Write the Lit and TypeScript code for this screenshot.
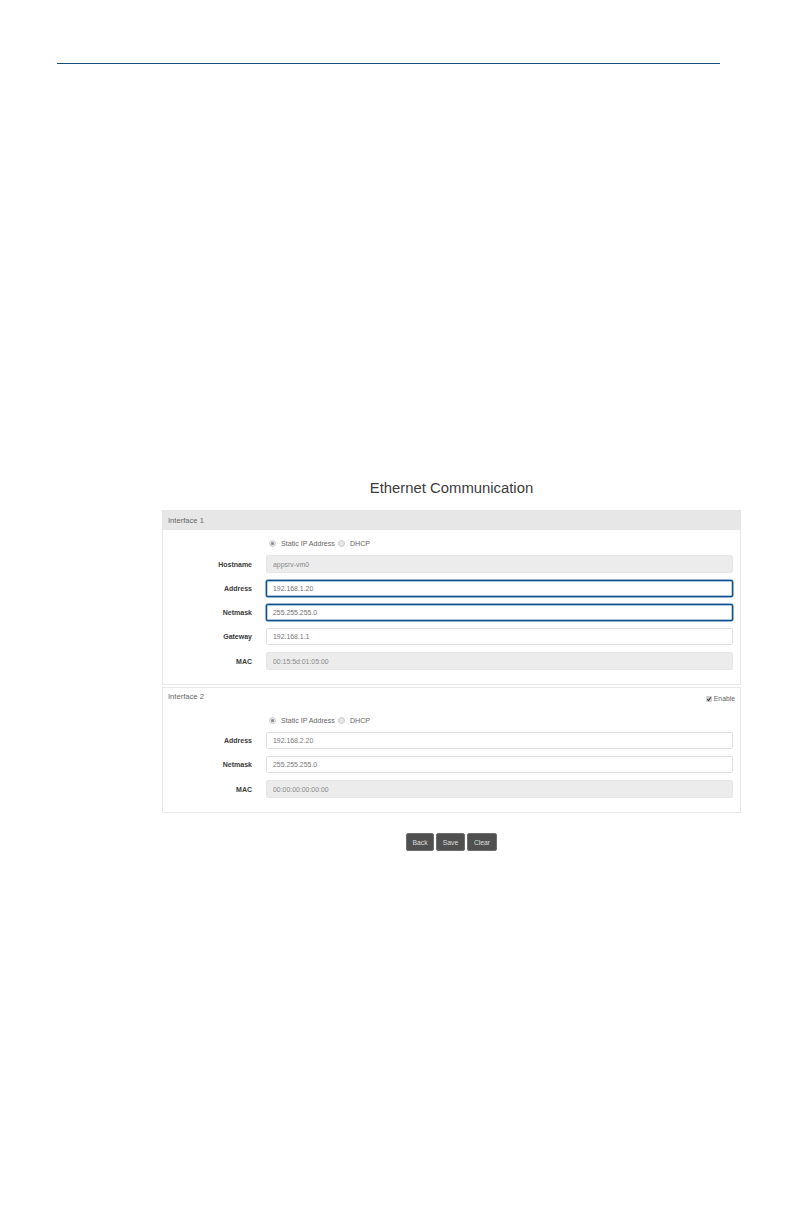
import { LitElement, html, css } from "lit";
import { customElement } from "lit/decorators.js";

type Field = { label: string; value: string; kind?: "off" | "focus" };

const if1: Field[] = [
  { label: "Hostname", value: "appsrv-vm0", kind: "off" },
  { label: "Address", value: "192.168.1.20", kind: "focus" },
  { label: "Netmask", value: "255.255.255.0", kind: "focus" },
  { label: "Gateway", value: "192.168.1.1" },
  { label: "MAC", value: "00:15:5d:01:05:00", kind: "off" },
];
const if2: Field[] = [
  { label: "Address", value: "192.168.2.20" },
  { label: "Netmask", value: "255.255.255.0" },
  { label: "MAC", value: "00:00:00:00:00:00", kind: "off" },
];

@customElement("app-root")
export class AppRoot extends LitElement {
  static styles = css`
    :host {
      display: block;
      width: 793px;
      height: 1225px;
      background: #fff;
      font-family: "Liberation Sans", Arial, sans-serif;
      color: #333;
      overflow: hidden;
    }
    .page { padding-top: 63px; }
    .rule { height: 1px; margin: 0 73px 0 57px; background: #1a4c80; }
    .title {
      margin: 415px 0 0 162px;
      width: 579px;
      height: 18px;
      line-height: 18px;
      text-align: center;
      font-size: 14.85px;
      font-weight: 400;
      color: #3c3c3c;
    }
    .panels { margin: 13px 52px 0 162px; display: flex; flex-direction: column; gap: 2px; }
    .panel { border: 1px solid #e8e8e8; box-sizing: border-box; }
    .p1 { height: 175px; }
    .p2 { height: 126px; }
    .head {
      background: #e7e7e7;
      height: 19px;
      margin: -1px -1px 0;
      padding: 1px 6px 0;
      display: flex;
      align-items: center;
      font-size: 7.6px;
      color: #666;
    }
    .head2 {
      height: 21px;
      padding: 0 5px;
      display: flex;
      justify-content: space-between;
      font-size: 7.6px;
      color: #666;
      line-height: 18px;
    }
    .enable { display: flex; align-items: center; gap: 2px; font-size: 6.8px; color: #666; height: 21px; }
    .check {
      width: 6px;
      height: 6px;
      border-radius: 1px;
      background: #cfcfcf;
      display: block;
    }
    .radios {
      display: flex;
      align-items: center;
      height: 10px;
      margin: 8px 0 7px 106px;
      font-size: 7.1px;
      color: #666;
    }
    .p2 .radios { margin-top: 6px; margin-bottom: 7px; }
    .dot {
      width: 5px;
      height: 5px;
      border-radius: 50%;
      border: 1px solid #cfcfcf;
      background: #e4e4e4;
      display: flex;
      align-items: center;
      justify-content: center;
    }
    .dot.on::after { content: ""; width: 3px; height: 3px; border-radius: 50%; background: #888; }
    .r-label { margin-left: 5px; padding-top: 1px; }
    .r-label.first { margin-right: 3px; }
    .rows { display: flex; flex-direction: column; gap: 7px; }
    .row { display: flex; align-items: center; }
    .label {
      width: 89px;
      text-align: right;
      font-size: 7px;
      font-weight: 700;
      color: #3a3a3a;
      margin-right: 14px;
    }
    .input {
      width: 467px;
      height: 17px;
      box-sizing: border-box;
      border: 1px solid #e0e0e0;
      border-radius: 2px;
      background: #fff;
      padding: 0 6px;
      display: flex;
      align-items: center;
      font-size: 6.9px;
      color: #777;
    }
    .input.off { height: 18px; background: #ececec; border-color: #e6e6e6; color: #8a8a8a; }
    .input.focus {
      border: 1px solid #134f8a;
      box-shadow: 0 0 0 0.5px #2f6499, inset 0 0 0 0.4px #5f8cba;
      color: #707070;
    }
    .buttons { display: flex; gap: 2px; margin: 20px 0 0 406px; }
    .btn {
      height: 18px;
      box-sizing: border-box;
      background: #505050;
      border: 1px solid #6f6f6f;
      border-radius: 2px;
      color: #dedede;
      font-size: 6.8px;
      display: flex;
      align-items: center;
      justify-content: center;
    }
    .back { width: 28px; }
    .save { width: 29px; }
    .clear { width: 30px; }
  `;

  private radios() {
    return html`<div class="radios">
      <span class="dot on"></span><span class="r-label first">Static IP Address</span>
      <span class="dot"></span><span class="r-label">DHCP</span>
    </div>`;
  }

  private rows(fields: Field[]) {
    return html`<div class="rows">
      ${fields.map(
        (f) => html`<div class="row">
          <div class="label">${f.label}</div>
          <div class="input ${f.kind ?? ""}">${f.value}</div>
        </div>`
      )}
    </div>`;
  }

  render() {
    return html`<div class="page">
      <div class="rule"></div>
      <h1 class="title">Ethernet Communication</h1>
      <div class="panels">
        <section class="panel p1">
          <div class="head">Interface 1</div>
          ${this.radios()} ${this.rows(if1)}
        </section>
        <section class="panel p2">
          <div class="head2">
            <span>Interface 2</span>
            <span class="enable">
              <svg class="check" viewBox="0 0 6 6"><path d="M1.2 3.2 2.5 4.6 4.9 1.2" fill="none" stroke="#444" stroke-width="1.1" /></svg>
              Enable
            </span>
          </div>
          ${this.radios()} ${this.rows(if2)}
        </section>
      </div>
      <div class="buttons">
        <div class="btn back">Back</div>
        <div class="btn save">Save</div>
        <div class="btn clear">Clear</div>
      </div>
    </div>`;
  }
}
